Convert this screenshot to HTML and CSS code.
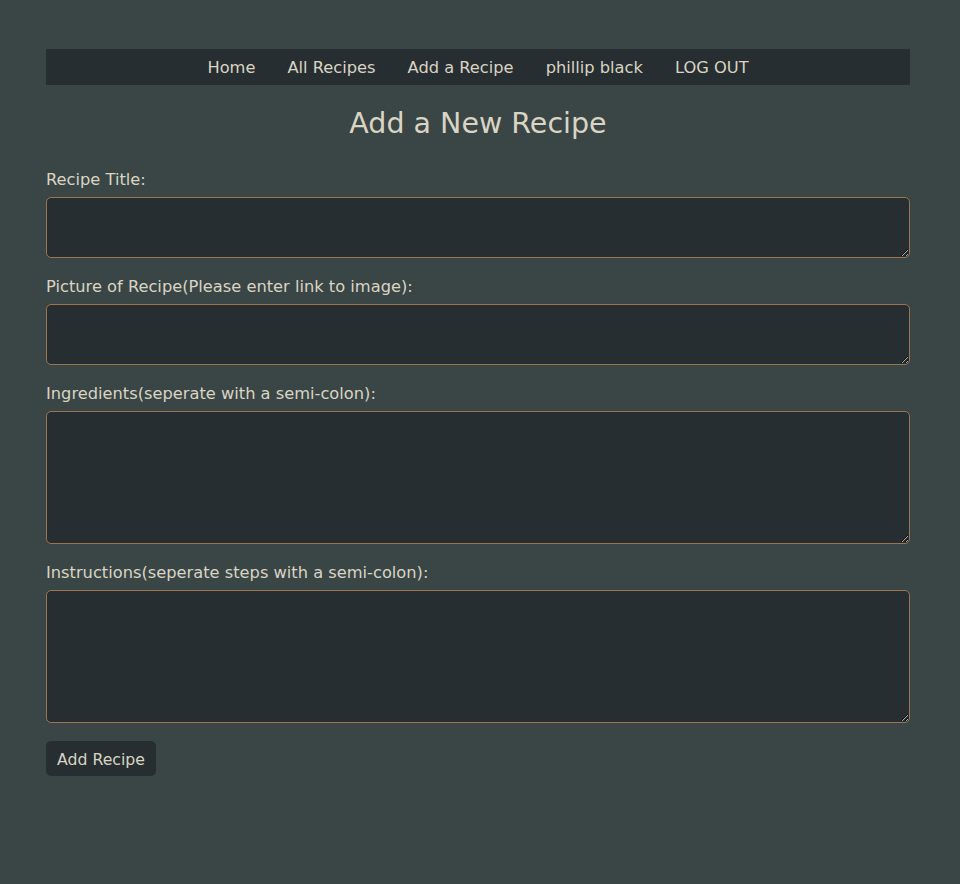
FILE: index.html
```html
<!DOCTYPE html>
<html lang="en">
<head>
<meta charset="utf-8">
<title>Add a New Recipe</title>
<link rel="stylesheet" href="styles.css">
</head>
<body>
<div class="page">
  <nav class="nav">
    <a href="#">Home</a>
    <a href="#">All Recipes</a>
    <a href="#">Add a Recipe</a>
    <a href="#">phillip black</a>
    <a href="#">LOG OUT</a>
  </nav>
  <h1 class="title">Add a New Recipe</h1>
  <form class="form">
    <label class="label" for="t">Recipe Title:</label>
    <textarea id="t" class="field field-short"></textarea>
    <label class="label" for="p">Picture of Recipe(Please enter link to image):</label>
    <textarea id="p" class="field field-short"></textarea>
    <label class="label" for="i">Ingredients(seperate with a semi-colon):</label>
    <textarea id="i" class="field field-tall"></textarea>
    <label class="label" for="s">Instructions(seperate steps with a semi-colon):</label>
    <textarea id="s" class="field field-tall"></textarea>
    <button type="button" class="btn">Add Recipe</button>
  </form>
</div>
</body>
</html>
```
FILE: styles.css
```css
html, body {
  margin: 0;
  padding: 0;
  background: #3a4646;
  color: #d9d4c3;
  font-family: "DejaVu Sans", Verdana, sans-serif;
  font-size: 16.25px;
}
.page {
  padding: 49px 50px 40px 46px;
}
.nav {
  height: 36px;
  box-sizing: border-box;
  padding-top: 2px;
  background: #272e31;
  display: flex;
  justify-content: center;
  align-items: center;
  gap: 32px;
}
.nav a {
  color: #d9d4c3;
  text-decoration: none;
  font-size: 16.25px;
  line-height: 20px;
}
.title {
  margin: 22px 0 0;
  text-align: center;
  font-weight: normal;
  font-size: 28.5px;
  line-height: 34px;
  color: #d9d4c3;
}
.form {
  display: flex;
  flex-direction: column;
  align-items: flex-start;
  padding-top: 28px;
}
.label {
  display: block;
  line-height: 20px;
  padding-top: 1px;
  margin-bottom: 7px;
}
.field {
  display: block;
  width: 100%;
  box-sizing: border-box;
  margin: 0 0 18px;
  background: #272e31;
  border: 1px solid #9a7550;
  border-radius: 5px;
  color: #d9d4c3;
  font-family: inherit;
  font-size: 16px;
  padding: 4px 8px;
}
.field-short { height: 61px; }
.field-tall { height: 133px; }
.btn {
  width: 110px;
  height: 35px;
  padding: 1px 0 0;
  background: #272e31;
  color: #d9d4c3;
  border: none;
  border-radius: 5px;
  font-family: inherit;
  font-size: 15.7px;
}
```
